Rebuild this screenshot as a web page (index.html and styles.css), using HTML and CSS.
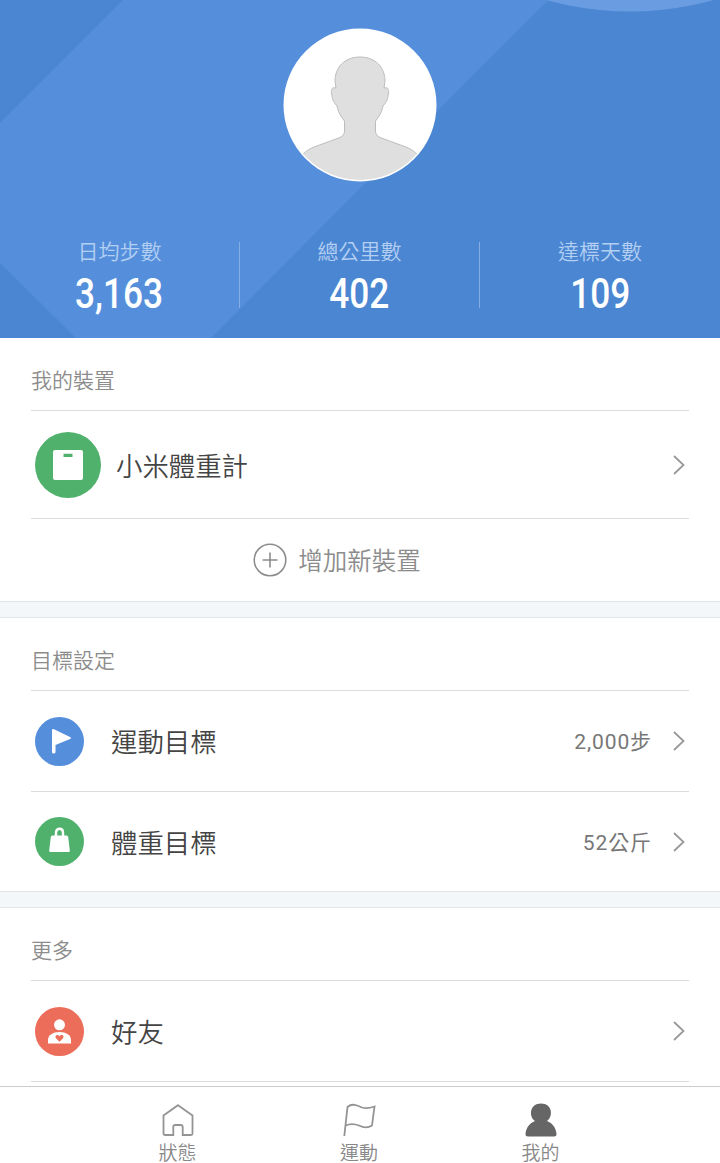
FILE: index.html
```
<!DOCTYPE html>
<html lang="zh-Hant">
<head>
<meta charset="UTF-8">
<meta name="viewport" content="width=device-width, initial-scale=1.0">
<title>我的</title>
<link rel="stylesheet" href="styles.css">
</head>
<body>

<main class="content">
    <header class="profile">
        <svg class="profile-bg" viewBox="0 0 720 338">
            <path fill="#558fdc" d="M123 0H548L211 338H76L0 263V123z"/>
            <circle cx="630" cy="-300.500" r="312" fill="#699ce0"/>
        </svg>
        <svg class="avatar" viewBox="0 0 154 154">
            <defs>
                <clipPath id="face"><circle cx="77" cy="77" r="75"/></clipPath>
            </defs>
            <circle cx="77" cy="77" r="76.500" fill="#fff"/>
            <path clip-path="url(#face)" fill="#dfdfdf" stroke="#bdbdbd" stroke-width="1" d="M77 29C61 29 52 40 52 53L53 60C49 59 48 61 48.500 65C49 71 51 75 54 78C55 84 58 89 61.500 93V103C61.500 106 60 108 57 109.500L31 119C24 122 20 125 18 130V156H136V130C134 125 130 122 123 119L97 109.500C94 108 92.500 106 92.500 103V93C96 89 99 84 100 78C103 75 105 71 105.500 65C106 61 105 59 101 60L102 53C102 40 93 29 77 29z"/>
        </svg>
        <div class="stats">
            <div class="stat">
                <span class="stat-label">日均步數</span>
                <span class="stat-value">3,163</span>
            </div>
            <div class="stat">
                <span class="stat-label">總公里數</span>
                <span class="stat-value">402</span>
            </div>
            <div class="stat">
                <span class="stat-label">達標天數</span>
                <span class="stat-value">109</span>
            </div>
        </div>
    </header>

    <section class="section">
        <h2 class="section-title">我的裝置</h2>
        <div class="row row-device">
            <svg class="icon-large" viewBox="0 0 66 66">
                <circle cx="33" cy="33" r="33" fill="#50b16c"/>
                <path fill="#fff" fill-rule="evenodd" d="M20 18H46Q48 18 48 20V46Q48 48 46 48H20Q18 48 18 46V20Q18 18 20 18zM28.500 21.700V25H37.500V21.700z"/>
            </svg>
            <span class="row-name">小米體重計</span>
            <svg class="chevron" viewBox="0 0 12 20"><path d="M1 1L10.500 10L1 19"/></svg>
        </div>
        <div class="add">
            <svg class="add-icon" viewBox="0 0 34 34"><circle cx="17" cy="17" r="15.800"/><path d="M9.500 17H24.500M17 9.500V24.500"/></svg>
            <span class="add-text">增加新裝置</span>
        </div>
    </section>

    <section class="section">
        <h2 class="section-title">目標設定</h2>
        <div class="row">
            <svg class="icon" viewBox="0 0 49 49">
                <circle cx="24.500" cy="24.500" r="24.500" fill="#558fdc"/>
                <path fill="#fff" d="M17 13.500Q17 11.500 19 12.200L35 20Q37 21 35 22L20.500 28V35Q20.500 36.500 18.700 36.500Q17 36.500 17 35z"/>
            </svg>
            <span class="row-name">運動目標</span>
            <span class="row-value">2,000步</span>
            <svg class="chevron" viewBox="0 0 12 20"><path d="M1 1L10.500 10L1 19"/></svg>
        </div>
        <div class="row">
            <svg class="icon" viewBox="0 0 49 49">
                <circle cx="24.500" cy="24.500" r="24.500" fill="#50b16c"/>
                <path fill="none" stroke="#fff" stroke-width="2.400" d="M21 20V15.500C21 10.500 28 10.500 28 15.500V20"/>
                <path fill="#fff" d="M17.500 18.500H31.500Q33 18.500 33.200 20L34.800 33.500Q35 35 33.500 35H15.500Q14 35 14.200 33.500L15.800 20Q16 18.500 17.500 18.500z"/>
            </svg>
            <span class="row-name">體重目標</span>
            <span class="row-value">52公斤</span>
            <svg class="chevron" viewBox="0 0 12 20"><path d="M1 1L10.500 10L1 19"/></svg>
        </div>
    </section>

    <section class="section">
        <h2 class="section-title">更多</h2>
        <div class="row row-friends">
            <svg class="icon" viewBox="0 0 49 49">
                <circle cx="24.500" cy="24.500" r="24.500" fill="#ec6d5a"/>
                <circle cx="24.500" cy="17.800" r="5.500" fill="#fff"/>
                <path fill="#fff" d="M13 36.500V33C13 28 18 25 24.500 25S36 28 36 33V36.500z"/>
                <path fill="#ec6d5a" d="M24.500 34.800L21 31.200C19 28 23 26.800 24.500 29.200C26 26.800 30 28 28 31.200z"/>
            </svg>
            <span class="row-name">好友</span>
            <svg class="chevron" viewBox="0 0 12 20"><path d="M1 1L10.500 10L1 19"/></svg>
        </div>
    </section>
</main>

<nav class="tabs">
    <a class="tab">
        <svg class="tab-icon" viewBox="0 0 34 34"><path d="M17 2.200L31.500 12.500V30.500Q31.500 32 30 32H21.700V24Q21.700 22 19.700 22H14.300Q12.300 22 12.300 24V32H4Q2.500 32 2.500 30.500V12.500z"/></svg>
        <span>狀態</span>
    </a>
    <a class="tab">
        <svg class="tab-icon" viewBox="0 0 34 34"><path d="M2.300 33L5.500 4C10 0 15 2 20 4.500C25 6 28 5 32.500 3.500L30 22.500C26 25 22 25 17 22.500C12 20.500 8 20.500 3.700 22.500"/></svg>
        <span>運動</span>
    </a>
    <a class="tab">
        <svg class="tab-icon tab-icon-active" viewBox="0 0 34 34"><path d="M17 .5C5.500 .5 4.500 13.500 11 18C5.500 20 2 25 1.500 31Q1.500 33.500 4 33.500H30Q32.500 33.500 32.500 31C32 25 28.500 20 23 18C29.500 13.500 28.500 .5 17 .5z"/></svg>
        <span>我的</span>
    </a>
</nav>

</body>
</html>
```
FILE: styles.css
```
* {
    box-sizing: border-box;
}
body {
    margin: 0;
    height: 1163px;
    display: flex;
    flex-direction: column;
    overflow: hidden;
    font-family: "Noto Sans CJK TC", sans-serif;
    font-weight: 350;
    background-color: #fff;
    color: #444;
}
.content {
    flex: 1;
    min-height: 0;
    overflow: hidden;
}
.profile {
    position: relative;
    height: 338px;
    padding-top: 28px;
    background-color: #4b86d2;
    color: #fff;
}
.profile-bg {
    position: absolute;
    top: 0;
    left: 0;
    width: 720px;
    height: 338px;
}
.avatar {
    position: relative;
    display: block;
    width: 154px;
    height: 154px;
    margin: 0 auto;
}
.stats {
    position: relative;
    display: grid;
    grid-template-columns: repeat(3, 1fr);
    margin-top: 60px;
}
.stat {
    display: flex;
    flex-direction: column;
    align-items: center;
    height: 66px;
}
.stat:not(:last-child) {
    border-right: 1px solid #85aee5;
}
.stat-label {
    font-size: 21px;
    line-height: 16px;
    color: #b3cff2;
}
.stat-value {
    margin-top: 14px;
    font-family: Roboto, sans-serif;
    font-size: 42.5px;
    font-weight: 500;
    line-height: 44px;
    transform: scaleX(0.83);
}
.section {
    padding: 0 31px;
}
.section + .section {
    border-top: 1px solid #e3e6e8;
    box-shadow: inset 0 15px #f4f7f9, inset 0 16px #e3e6e8;
    padding-top: 16px;
}
.section-title {
    height: 73px;
    margin: 0;
    padding-top: 12px;
    border-bottom: 1px solid #dcdcdc;
    font-size: 21px;
    font-weight: 350;
    line-height: 59px;
    color: #8c8c8c;
}
.row {
    display: flex;
    align-items: center;
    height: 100px;
    padding: 0 4px;
}
.row + .row {
    border-top: 1px solid #dcdcdc;
}
.row-device {
    height: 108px;
    border-bottom: 1px solid #dcdcdc;
}
.row-friends {
    height: 101px;
    border-bottom: 1px solid #dcdcdc;
}
.icon {
    width: 49px;
    height: 49px;
    margin-right: 27px;
}
.icon-large {
    width: 66px;
    height: 66px;
    margin-right: 15px;
}
.row-name {
    flex: 1;
    padding-bottom: 1px;
    font-size: 26.4px;
}
.row-value {
    padding-bottom: 2px;
    font-family: Roboto, "Noto Sans CJK TC", sans-serif;
    font-size: 21px;
    font-weight: 400;
    letter-spacing: 0.9px;
    color: #777;
}
.chevron {
    width: 12px;
    height: 20px;
    margin-left: 21px;
    fill: none;
    stroke: #999;
    stroke-width: 1.8;
}
.add {
    display: flex;
    justify-content: center;
    align-items: center;
    gap: 11px;
    height: 82px;
    padding-right: 46px;
    font-size: 24.5px;
    color: #8c8c8c;
}
.add-text {
    padding-bottom: 1px;
}
.add-icon {
    width: 34px;
    height: 34px;
    fill: none;
    stroke: #8c8c8c;
    stroke-width: 1.6;
}
.tabs {
    display: flex;
    justify-content: center;
    height: 77px;
    padding-right: 2px;
    border-top: 1px solid #ccc;
    background-color: #fff;
}
.tab {
    display: flex;
    flex-direction: column;
    align-items: center;
    width: 181.5px;
    padding-top: 16px;
    font-size: 19px;
    line-height: 26px;
    color: #888;
}
.tab-icon {
    flex: none;
    width: 34px;
    height: 34px;
    margin-bottom: 2px;
    fill: none;
    stroke: #949494;
    stroke-width: 1.8;
}
.tab-icon-active {
    fill: #666;
    stroke: none;
}
```
